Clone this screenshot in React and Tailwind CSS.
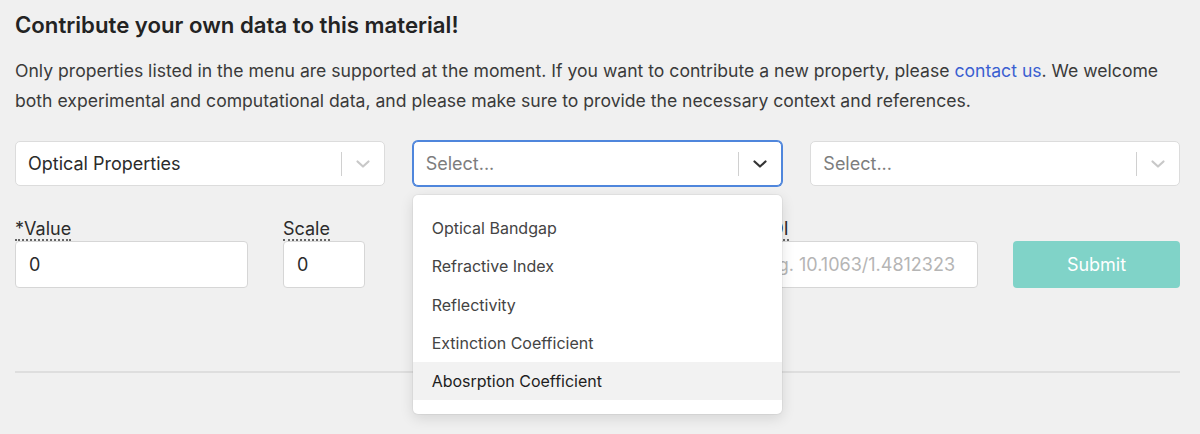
import React from "react";

function Chevron({ dark }) {
  return (
    <svg width="20" height="20" viewBox="0 0 20 20" className={dark ? "text-[#333]" : "text-[#c8c8c8]"}>
      <path d="M4.5 7.5 L10 12.5 L15.5 7.5" fill="none" stroke="currentColor" strokeWidth="2.2" strokeLinecap="round" strokeLinejoin="round" />
    </svg>
  );
}

function Select({ value, placeholder, focused, children }) {
  return (
    <div className="relative">
      <div
        className={
          "flex h-[45px] items-center rounded-[5px] bg-white " +
          (focused ? "border border-[#4f86dc] shadow-[0_0_0_1px_#4f86dc]" : "border border-[#dcdcdc]")
        }
      >
        <div className={"flex-1 pl-[12px] text-[18px] " + (value ? "text-[#2b2b2b]" : "text-[#7d7d7d]")}>
          {value || placeholder}
        </div>
        <div className="h-[24px] w-px bg-[#d0d0d0]" />
        <div className="flex w-[42px] items-center justify-center">
          <Chevron dark={focused} />
        </div>
      </div>
      {children}
    </div>
  );
}

function Label({ children }) {
  return (
    <div className="h-[24px] text-[18px] leading-[24px] text-[#2b2b2b]">
      <span className="border-b-2 border-dotted border-[#666]">{children}</span>
    </div>
  );
}

function Input({ value, placeholder, className = "" }) {
  return (
    <div className={"flex h-[47px] items-center rounded-[4px] border border-[#d6d6d6] bg-white px-[13px] text-[18px] " + className}>
      {value ? <span className="text-[#2b2b2b]">{value}</span> : <span className="whitespace-nowrap text-[#b5b5b5]">{placeholder}</span>}
    </div>
  );
}

export default function App() {
  const options = ["Optical Bandgap", "Refractive Index", "Reflectivity", "Extinction Coefficient", "Abosrption Coefficient"];
  return (
    <div className="h-[434px] w-[1200px] overflow-hidden bg-[#f0f0f0] pl-[15px] pr-[20px] pt-[10px] font-['Inter','Liberation_Sans',sans-serif]">
      <h2 className="text-[22.2px] font-semibold leading-[30px] text-[#232323]">
        Contribute your own data to this material!
      </h2>
      <p className="mt-[16px] text-[17.6px] leading-[30px] text-[#3a3a3a]">
        Only properties listed in the menu are supported at the moment. If you want to contribute a new property, please{" "}
        <span className="text-[#3b5fd1]">contact us</span>. We welcome both experimental and computational data, and please make sure to provide the necessary context and references.
      </p>

      <div className="mt-[25px] grid grid-cols-3 gap-x-[28px]">
        <Select value="Optical Properties" />
        <Select placeholder="Select..." focused>
          <div className="absolute left-0 right-0 top-[54px] z-10 rounded-[5px] bg-white pb-[14px] pt-[14px] shadow-[0_4px_14px_rgba(0,0,0,0.12),0_0_0_1px_rgba(0,0,0,0.04)]">
            {options.map((o, i) => (
              <div
                key={o}
                className={
                  "flex h-[38.25px] items-center px-[19px] text-[16px] " +
                  (i === 4 ? "bg-[#f2f2f2] text-[#1e1e1e]" : "text-[#444]")
                }
              >
                {o}
              </div>
            ))}
          </div>
        </Select>
        <Select placeholder="Select..." />
      </div>

      <div className="mt-[31px] flex items-start">
        <div className="w-[233px]">
          <Label>*Value</Label>
          <Input value="0" />
        </div>
        <div className="ml-[35px] w-[82px]">
          <Label>Scale</Label>
          <Input value="0" />
        </div>
        <div className="ml-[55px] w-[293px]">
          <Label>Unit</Label>
          <Input placeholder="" />
        </div>
        <div className="ml-[35px] w-[230px]">
          <Label>*DOI</Label>
          <Input placeholder="e.g. 10.1063/1.4812323" />
        </div>
        <button className="ml-[35px] mt-[24px] flex h-[47px] w-[167px] items-center justify-center rounded-[4px] bg-[#80d3c8] text-[18px] text-white">
          Submit
        </button>
      </div>

      <div className="mt-[83px] h-[2px] bg-[#dedede]" />
    </div>
  );
}
